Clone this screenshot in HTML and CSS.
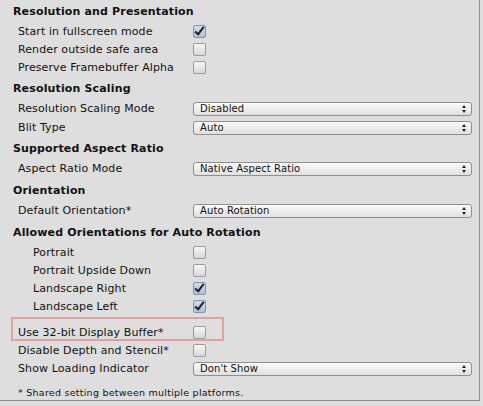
FILE: index.html
```html
<!DOCTYPE html>
<html>
<head>
<meta charset="utf-8">
<link rel="stylesheet" href="styles.css">
</head>
<body>
<div class="panel">
  <div class="heading h1">Resolution and Presentation</div>
  <div class="row"><span class="label">Start in fullscreen mode</span><span class="cb checked"></span></div>
  <div class="row"><span class="label">Render outside safe area</span><span class="cb"></span></div>
  <div class="row"><span class="label">Preserve Framebuffer Alpha</span><span class="cb"></span></div>

  <div class="heading">Resolution Scaling</div>
  <div class="row drow"><span class="label">Resolution Scaling Mode</span><span class="dd">Disabled<span class="arrows"></span></span></div>
  <div class="row drow"><span class="label">Blit Type</span><span class="dd">Auto<span class="arrows"></span></span></div>

  <div class="heading after-dd">Supported Aspect Ratio</div>
  <div class="row drow"><span class="label">Aspect Ratio Mode</span><span class="dd">Native Aspect Ratio<span class="arrows"></span></span></div>

  <div class="heading">Orientation</div>
  <div class="row drow"><span class="label">Default Orientation*</span><span class="dd">Auto Rotation<span class="arrows"></span></span></div>

  <div class="heading">Allowed Orientations for Auto Rotation</div>
  <div class="row ind"><span class="label">Portrait</span><span class="cb"></span></div>
  <div class="row ind"><span class="label">Portrait Upside Down</span><span class="cb"></span></div>
  <div class="row ind"><span class="label">Landscape Right</span><span class="cb checked"></span></div>
  <div class="row ind"><span class="label">Landscape Left</span><span class="cb checked"></span></div>

  <div class="row hl"><span class="label">Use 32-bit Display Buffer*</span><span class="cb"></span><span class="mark"></span></div>
  <div class="row"><span class="label">Disable Depth and Stencil*</span><span class="cb"></span></div>
  <div class="row drow"><span class="label">Show Loading Indicator</span><span class="dd">Don't Show<span class="arrows"></span></span></div>

  <div class="note">* Shared setting between multiple platforms.</div>
</div>
</body>
</html>
```
FILE: styles.css
```css
html, body {
  margin: 0;
  padding: 0;
  background: #dedede;
}
body {
  font-family: "DejaVu Sans", Verdana, sans-serif;
  font-size: 11px;
  color: #111;
}
.panel {
  width: 479px;
  height: 400px;
  border-right: 1px solid #8e8e8e;
  border-bottom: 1px solid #8e8e8e;
  display: flex;
  flex-direction: column;
}
.heading {
  font-weight: bold;
  font-size: 11px;
  letter-spacing: 0.15px;
  height: 18px;
  line-height: 18px;
  margin-top: 4px;
  margin-bottom: 1px;
  padding-left: 13px;
  flex: none;
}
.heading.h1 {
  margin-top: 3px;
}
.heading.after-dd {
  margin-top: 3px;
}
.row {
  display: flex;
  align-items: center;
  height: 18px;
  padding-left: 18px;
  position: relative;
  flex: none;
  letter-spacing: 0.1px;
}
.row.drow {
  height: 19px;
}
.row.ind {
  padding-left: 33px;
}
.label {
  width: 175px;
  flex: none;
  white-space: nowrap;
}
.row.ind .label {
  width: 160px;
}
.cb {
  width: 11px;
  height: 11px;
  border: 1px solid #9a9a9a;
  border-radius: 2px;
  background: linear-gradient(#f6f6f6, #d8d8d8);
  position: relative;
  flex: none;
}
.cb.checked {
  background: linear-gradient(#d2daea, #b3c0d6);
  border-color: #8a93a6;
}
.cb.checked::after {
  content: "";
  position: absolute;
  left: 3px;
  top: -1px;
  width: 3px;
  height: 8px;
  border-right: 2.5px solid #1a2132;
  border-bottom: 2.5px solid #1a2132;
  transform: rotate(38deg);
}
.dd {
  flex: none;
  width: 265px;
  height: 12px;
  border: 1px solid #8f8f8f;
  border-radius: 3px;
  background: linear-gradient(#fbfbfb, #e0e0e0);
  font-size: 10px;
  line-height: 12px;
  padding-left: 6px;
  padding-right: 6px;
  position: relative;
  color: #111;
  letter-spacing: 0.1px;
}
.arrows {
  position: absolute;
  right: 5px;
  top: 2px;
  width: 4px;
  height: 8px;
}
.arrows::before, .arrows::after {
  content: "";
  position: absolute;
  left: 0;
  border-left: 2px solid transparent;
  border-right: 2px solid transparent;
}
.arrows::before {
  top: 0;
  border-bottom: 3px solid #222;
}
.arrows::after {
  bottom: 0;
  border-top: 3px solid #222;
}
.row.hl {
  margin-top: 8px;
}
.mark {
  position: absolute;
  left: 11px;
  top: -6px;
  width: 213px;
  height: 24px;
  box-sizing: border-box;
  border: 2px solid #e2a0a0;
}
.note {
  margin-top: 8px;
  height: 14px;
  line-height: 14px;
  padding-left: 18px;
  font-size: 9.5px;
  letter-spacing: 0.25px;
  flex: none;
}
```
